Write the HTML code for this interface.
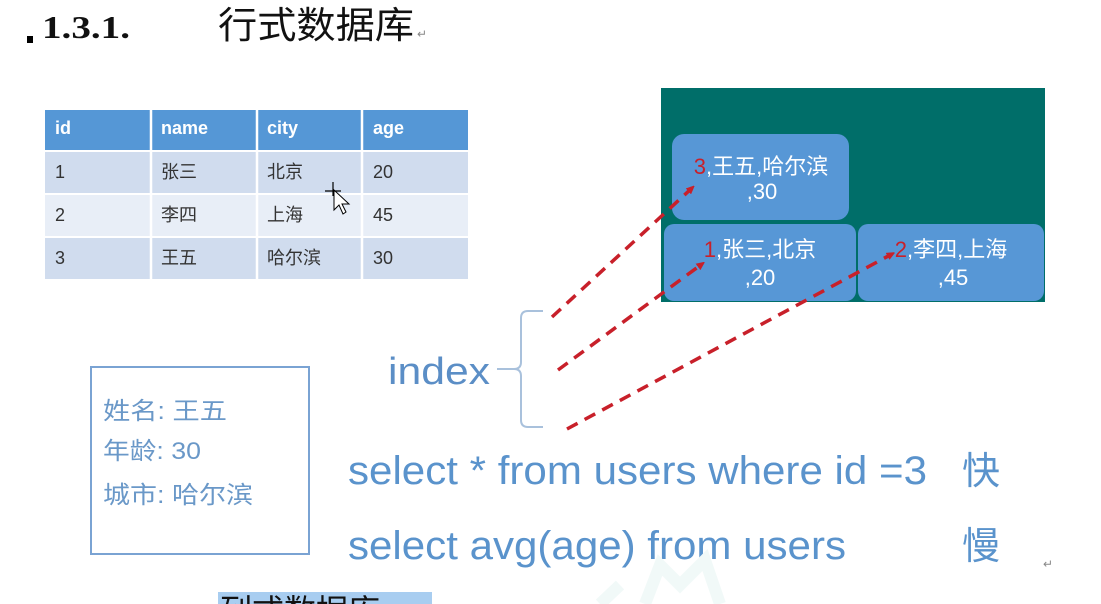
<!DOCTYPE html>
<html><head><meta charset="utf-8"><style>
html,body{margin:0;padding:0;background:#fff;width:1101px;height:604px;overflow:hidden}
svg{display:block}
</style></head><body>
<svg width="1101" height="604" viewBox="0 0 1101 604" xmlns="http://www.w3.org/2000/svg">
<defs>
<marker id="ah" markerWidth="8" markerHeight="8" refX="5" refY="4" orient="auto" markerUnits="userSpaceOnUse"><path d="M0,0 L9,4 L0,8 z" fill="#c8202a"/></marker>
</defs>
<!-- heading -->
<rect x="27" y="36" width="6" height="7" fill="#000"/>
<text x="42" y="38" font-family="Liberation Serif, serif" font-weight="bold" font-size="32" fill="#111" textLength="88" lengthAdjust="spacingAndGlyphs">1.3.1.</text>
<text x="218" y="38" font-family="'Liberation Sans','Noto Sans CJK SC',sans-serif" font-size="37" fill="#111" textLength="196" lengthAdjust="spacingAndGlyphs">行式数据库</text>
<text x="417" y="38" font-family="Liberation Sans,sans-serif" font-size="12" fill="#888">↵</text>

<!-- table -->
<g font-family="'Liberation Sans','Noto Sans CJK SC',sans-serif" font-size="18">
<rect x="45" y="110" width="423" height="40" fill="#5597d6"/>
<rect x="45" y="152" width="423" height="41" fill="#d0dcee"/>
<rect x="45" y="195" width="423" height="41" fill="#e8eef7"/>
<rect x="45" y="238" width="423" height="41" fill="#d0dcee"/>
<g stroke="#fff" stroke-width="2.5">
<line x1="151" y1="110" x2="151" y2="280"/><line x1="257" y1="110" x2="257" y2="280"/><line x1="362" y1="110" x2="362" y2="280"/>
</g>
<g fill="#fff" font-weight="bold"><text x="55" y="134">id</text><text x="161" y="134">name</text><text x="267" y="134">city</text><text x="373" y="134">age</text></g>
<g fill="#333">
<text x="55" y="178">1</text><text x="161" y="178">张三</text><text x="267" y="178">北京</text><text x="373" y="178">20</text>
<text x="55" y="221">2</text><text x="161" y="221">李四</text><text x="267" y="221">上海</text><text x="373" y="221">45</text>
<text x="55" y="264">3</text><text x="161" y="264">王五</text><text x="267" y="264">哈尔滨</text><text x="373" y="264">30</text>
</g>
</g>
<!-- cursor -->
<path d="M334,190 L334,210 L339,205 L343,214 L346,212 L342,204 L349,204 Z" fill="#fff" stroke="#000" stroke-width="1"/>
<path d="M325,191 h16 M333,182 v14" stroke="#000" stroke-width="1.2"/>

<!-- green block -->
<rect x="661" y="88" width="384" height="214" fill="#006e69"/>
<g font-family="'Liberation Sans','Noto Sans CJK SC',sans-serif" font-size="22" fill="#fff" text-anchor="middle">
<rect x="672" y="134" width="177" height="86" rx="12" fill="#5797d6"/>
<rect x="664" y="224" width="192" height="77" rx="10" fill="#5797d6"/>
<rect x="858" y="224" width="186" height="77" rx="10" fill="#5797d6"/>
<text x="761" y="174"><tspan fill="#c8202a">3</tspan>,王五,哈尔滨</text>
<text x="762" y="199">,30</text>
<text x="760" y="257"><tspan fill="#c8202a">1</tspan>,张三,北京</text>
<text x="760" y="285">,20</text>
<text x="951" y="257"><tspan fill="#c8202a">2</tspan>,李四,上海</text>
<text x="953" y="285">,45</text>
</g>
<!-- arrows -->
<g stroke="#c8202a" stroke-width="3.5" stroke-dasharray="12,8" fill="none" marker-end="url(#ah)">
<line x1="552" y1="317" x2="692" y2="188"/>
<line x1="558" y1="370" x2="702" y2="264"/>
<line x1="567" y1="429" x2="892" y2="254"/>
</g>
<!-- brace -->
<path d="M543,311 H528 Q521,311 521,318 V362 Q521,369 514,369 H497 M514,369 Q521,369 521,376 V420 Q521,427 528,427 H543" stroke="#a9c1dc" stroke-width="2" fill="none"/>
<text x="388" y="384" font-family="Liberation Sans,sans-serif" font-size="38" fill="#5b8ec6" textLength="102" lengthAdjust="spacingAndGlyphs">index</text>

<!-- left box -->
<rect x="91" y="367" width="218" height="187" fill="none" stroke="#7aa3d3" stroke-width="2"/>
<g font-family="'Liberation Sans','Noto Sans CJK SC',sans-serif" font-size="24" fill="#6a98c8">
<text x="103" y="419" textLength="124" lengthAdjust="spacingAndGlyphs">姓名: 王五</text>
<text x="103" y="459" textLength="98" lengthAdjust="spacingAndGlyphs">年龄: 30</text>
<text x="103" y="503" textLength="150" lengthAdjust="spacingAndGlyphs">城市: 哈尔滨</text>
</g>

<!-- queries -->
<g font-family="'Liberation Sans','Noto Sans CJK SC',sans-serif" font-size="40" fill="#5a93cc">
<text x="348" y="484" textLength="579" lengthAdjust="spacingAndGlyphs">select * from users where id =3</text>
<text x="962" y="484" font-size="38">快</text>
<text x="348" y="559" textLength="498" lengthAdjust="spacingAndGlyphs">select avg(age) from users</text>
<text x="962" y="559" font-size="38">慢</text>
</g>
<text x="1043" y="568" font-family="Liberation Sans,sans-serif" font-size="12" fill="#888">↵</text>

<!-- bottom -->
<rect x="218" y="592" width="214" height="12" fill="#a8cdf0"/>
<text x="220" y="622" font-family="'Liberation Sans','Noto Sans CJK SC',sans-serif" font-size="32" fill="#111">列式数据库</text>
<path d="M600,604 L620,585 M645,604 L660,565 L680,585 L705,560 L720,604" stroke="#f1f9f8" stroke-width="12" fill="none"/>
</svg>
</body></html>
